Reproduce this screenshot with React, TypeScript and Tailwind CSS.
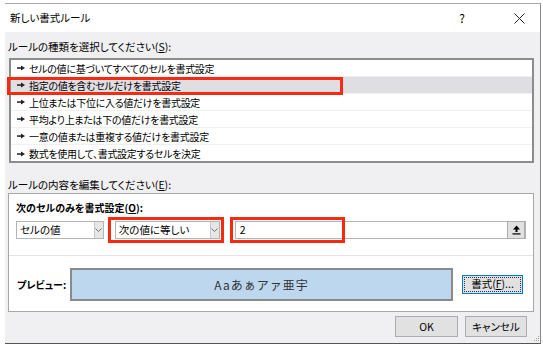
import React from "react";

const rules = [
  "セルの値に基づいてすべてのセルを書式設定",
  "指定の値を含むセルだけを書式設定",
  "上位または下位に入る値だけを書式設定",
  "平均より上または下の値だけを書式設定",
  "一意の値または重複する値だけを書式設定",
  "数式を使用して、書式設定するセルを決定",
];

function RuleArrow() {
  return (
    <svg width="8" height="6" viewBox="0 0 8 6" className="shrink-0">
      <rect x="0" y="2.3" width="4" height="1.5" fill="#222" />
      <polygon points="4,0.5 8,3 4,5.5" fill="#222" />
    </svg>
  );
}

function Chevron() {
  return (
    <div className="w-[9px] h-full bg-[#e6e6e6] border-l border-[#c8c8c8] flex items-center justify-center">
      <svg width="7" height="4" viewBox="0 0 7 4">
        <polyline points="0.5,0.5 3.5,3.5 6.5,0.5" fill="none" stroke="#666" strokeWidth="0.9" />
      </svg>
    </div>
  );
}

function Combo({ label, width }: { label: string; width: string }) {
  return (
    <div className={`${width} h-[18px] bg-white border border-[#b4b4b4] flex items-stretch`}>
      <div className="flex-1 pl-[3px] flex items-center leading-none">{label}</div>
      <Chevron />
    </div>
  );
}

export default function App() {
  return (
    <div className="relative w-[543px] h-[350px] bg-white overflow-hidden text-[10.5px] text-black font-['Noto_Sans_CJK_JP',sans-serif] [font-feature-settings:'palt']">
      <div className="ml-[5px] mt-[3px] w-[536px] h-[341px] border-t border-t-[#a8a8a8] border-r border-r-[#8a8a8a] border-b border-b-[#555] flex flex-col">
        {/* Title bar */}
        <div className="h-[28px] bg-white flex items-center pl-[5px] shrink-0">
          <span className="flex-1">新しい書式ルール</span>
          <span className="w-[14px] text-center mr-[45px] text-[12px]">?</span>
          <svg width="11" height="11" viewBox="0 0 11 11" className="mr-[15px]">
            <path d="M0.5 0.5 L10.5 10.5 M10.5 0.5 L0.5 10.5" stroke="#222" strokeWidth="1" />
          </svg>
        </div>

        {/* Body */}
        <div className="flex-1 bg-[#f0eff1] flex flex-col pl-[3px] pr-[6px] pt-[8px]">
          <div className="h-[14px] leading-[14px]">
            ルールの種類を選択してください(<span className="underline">S</span>):
          </div>
          <div className="mt-[4px] ml-[1px] h-[105px] bg-white border-2 border-[#8c8c8c] flex flex-col text-[10px] tracking-[-0.3px]">
            {rules.map((r, i) => (
              <div
                key={r}
                className={`h-[17px] shrink-0 flex items-center gap-[4px] pl-[6px] ${
                  i === 1 ? "bg-[#dfdee3]" : ""
                } ${i < 5 ? "border-b border-[#f0f0f0]" : ""}`}
              >
                <RuleArrow />
                <span>{r}</span>
              </div>
            ))}
          </div>

          <div className="mt-[15px] h-[14px] leading-[14px]">
            ルールの内容を編集してください(<span className="underline">E</span>):
          </div>

          <div className="mt-[1px] h-[119px] bg-white border border-[#a8a8a8] flex flex-col">
            <div className="h-[62px] px-[7px] pt-[7px] border-b border-[#e4e4e4] shrink-0">
              <div className="h-[14px] leading-[14px] font-bold text-[10px]">
                次のセルのみを書式設定(<span className="underline">O</span>):
              </div>
              <div className="mt-[6px] flex items-center">
                <Combo label="セルの値" width="w-[88px]" />
                <div className="ml-[11px]">
                  <Combo label="次の値に等しい" width="w-[105px]" />
                </div>
                <div className="ml-[15px] w-[292px] h-[18px] bg-white border border-[#b4b4b4] flex items-center justify-between pl-[4px] pr-[1px]">
                  <span className="leading-none">2</span>
                  <div className="w-[18px] h-[18px] -mr-[1px] bg-[#e1e1e1] border border-[#adadad] flex items-center justify-center">
                    <svg width="9" height="10" viewBox="0 0 9 10">
                      <polygon points="4.5,0.5 8,4.5 5.5,4.5 5.5,7 3.5,7 3.5,4.5 1,4.5" fill="#000" />
                      <rect x="0.5" y="8.3" width="8" height="1.2" fill="#000" />
                    </svg>
                  </div>
                </div>
              </div>
            </div>
            <div className="flex-1 flex items-center pl-[8px] pt-[2px]">
              <div className="w-[53px] font-bold text-[10px] whitespace-nowrap">プレビュー:</div>
              <div className="w-[383px] h-[33px] bg-[#bdd7ef] border-2 border-[#8a8a8a] flex items-center justify-center text-[12px] tracking-[1px] text-[#333] [font-feature-settings:normal]">
                Aaあぁアァ亜宇
              </div>
              <div className="ml-[9px] w-[61px] h-[19px] bg-[#e1e1e1] border border-[#0078d7] p-[1px]">
                <div className="w-full h-full border border-dotted border-[#333] flex items-center justify-center leading-none">
                  書式(<span className="underline">F</span>)...
                </div>
              </div>
            </div>
          </div>

          <div className="mt-[4px] flex justify-end gap-[7px] pr-[7px]">
            <div className="w-[63px] h-[21px] bg-[#e1e1e1] border border-[#adadad] flex items-center justify-center">
              OK
            </div>
            <div className="w-[62px] h-[21px] bg-[#e1e1e1] border border-[#adadad] flex items-center justify-center">
              キャンセル
            </div>
          </div>
        </div>
      </div>

      {/* size grip */}
      <svg width="7" height="7" viewBox="0 0 7 7" className="absolute left-[533px] top-[335px]">
        <rect x="5" y="1" width="1" height="1" fill="#a0a0a0" />
        <rect x="3" y="3" width="1" height="1" fill="#a0a0a0" />
        <rect x="5" y="3" width="1" height="1" fill="#a0a0a0" />
        <rect x="1" y="5" width="1" height="1" fill="#a0a0a0" />
        <rect x="3" y="5" width="1" height="1" fill="#a0a0a0" />
        <rect x="5" y="5" width="1" height="1" fill="#a0a0a0" />
      </svg>

      {/* red highlight annotations */}
      <div className="absolute left-[7px] top-[77px] w-[336px] h-[18px] border-[3px] border-[#f52a10]" />
      <div className="absolute left-[108px] top-[217px] w-[116px] h-[26px] border-[3px] border-[#f52a10]" />
      <div className="absolute left-[230px] top-[217px] w-[115px] h-[26px] border-[3px] border-[#f52a10]" />
    </div>
  );
}
